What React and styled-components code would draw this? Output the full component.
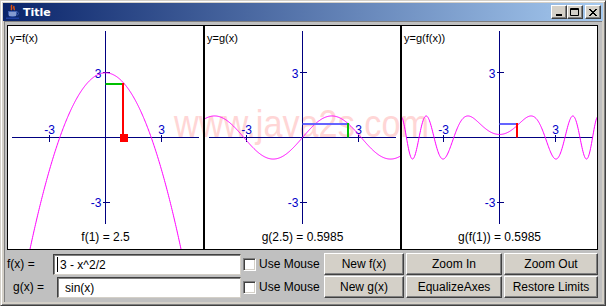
import React from "react";
import styled, { createGlobalStyle } from "styled-components";

// panel inner geometry (pixels)
const W = 195;
const H = 223;
const CX = 97.5;
const CY = 111.5;
const SX = 18.67;
const SY = 21.56;

const f = (x) => 3 - (x * x) / 2;
const g = (x) => Math.sin(x);
const gf = (x) => g(f(x));

function curvePath(fn) {
	let d = "";
	for (let px = 0; px <= W; px += 0.5) {
		const py = CY - fn((px - CX) / SX) * SY;
		d += (d ? "L" : "M") + px.toFixed(2) + " " + py.toFixed(2);
	}
	return d;
}

function Graph({ title, fn, caption, children }) {
	return (
		<Panel>
			<svg width={W} height={H}>
				<g stroke="#000080" strokeWidth="1" shapeRendering="crispEdges">
					<line x1={4} x2={191} y1={CY} y2={CY} />
					<line x1={CX} x2={CX} y1={5} y2={198} />
					<line x1={CX - 3 * SX} x2={CX - 3 * SX} y1={CY - 3} y2={CY + 4} />
					<line x1={CX + 3 * SX} x2={CX + 3 * SX} y1={CY - 3} y2={CY + 4} />
					<line x1={CX - 3} x2={CX + 4} y1={CY - 3 * SY} y2={CY - 3 * SY} />
					<line x1={CX - 3} x2={CX + 4} y1={CY + 3 * SY} y2={CY + 3 * SY} />
				</g>
				<g fill="#0000c8" fontSize="12" fontFamily="'Liberation Sans', Arial, sans-serif">
					<text x={CX - 3 * SX} y={CY - 4} textAnchor="middle">-3</text>
					<text x={CX + 3 * SX} y={CY - 4} textAnchor="middle">3</text>
					<text x={CX - 4} y={CY - 3 * SY + 5} textAnchor="end">3</text>
					<text x={CX - 4} y={CY + 3 * SY + 5} textAnchor="end">-3</text>
				</g>
				<path d={curvePath(fn)} fill="none" stroke="#ff00ff" strokeWidth="1" />
				{children}
				<g fill="#000" fontFamily="'Liberation Sans', Arial, sans-serif">
					<text x={2} y={16} fontSize="11">{title}</text>
					<text x={CX} y={215} fontSize="12" textAnchor="middle">{caption}</text>
				</g>
			</svg>
		</Panel>
	);
}

function TitleButton({ kind }) {
	return (
		<WinButton>
			<svg width="10" height="9" viewBox="0 0 10 9">
				{kind === "min" && <rect x="2" y="6" width="6" height="2" fill="#000" />}
				{kind === "max" && (
					<path d="M0.5 0.5h8v7h-8z M0.5 1.5h8" fill="none" stroke="#000" />
				)}
				{kind === "close" && (
					<path d="M1 1l7 7M2 1l7 7M8 1l-7 7M9 1l-7 7" stroke="#000" strokeWidth="1" />
				)}
			</svg>
		</WinButton>
	);
}

function App() {
	const mY1 = CY - 2.5 * SY;
	return (
		<>
			<GlobalStyle />
			<Window>
				<TitleBar>
					<svg width="16" height="16" viewBox="0 0 16 16">
						<path d="M7 1c-2 2 1 3 -1 5M9 2c-1 2 1 3 0 4" stroke="#e05010" strokeWidth="1.5" fill="none" />
						<path d="M3 7h9v3c0 2-2 3-4.5 3S3 12 3 10z" fill="#4060b0" />
						<path d="M12 8c2 0 2 3 0 3" stroke="#4060b0" fill="none" />
						<rect x="1" y="13.5" width="13" height="1.5" fill="#2040a0" />
						<path d="M4 9h7M4 11h7" stroke="#c8d4f0" />
					</svg>
					<TitleText>Title</TitleText>
					<TitleButtons>
						<TitleButton kind="min" />
						<TitleButton kind="max" />
						<Gap />
						<TitleButton kind="close" />
					</TitleButtons>
				</TitleBar>
				<Body>
					<GraphRow>
						<Watermark width="591" height="225">
							<text
								x="167"
								y="112"
								fontSize="39"
								textLength="255"
								lengthAdjust="spacingAndGlyphs"
								fill="#ffd6d6"
								fontFamily="'Liberation Sans', Arial, sans-serif"
							>
								www.java2s.com
							</text>
						</Watermark>
						<Graph title="y=f(x)" fn={f} caption="f(1) = 2.5">
							<rect x={CX} y={Math.round(mY1) - 1} width={SX} height={2} fill="#00c000" />
							<rect x={114} y={Math.round(mY1) - 1} width={2} height={CY - mY1 + 1} fill="#ff0000" />
							<rect x={112} y={108} width={8} height={8} fill="#ff0000" />
						</Graph>
						<Graph title="y=g(x)" fn={g} caption="g(2.5) = 0.5985">
							<rect x={CX} y={97} width={2.5 * SX} height={2} fill="#6464ff" />
							<rect x={142} y={97} width={2} height={CY - 97} fill="#00c000" />
						</Graph>
						<Graph title="y=g(f(x))" fn={gf} caption="g(f(1)) = 0.5985">
							<rect x={CX} y={97} width={SX} height={2} fill="#6464ff" />
							<rect x={114} y={97} width={2} height={CY - 97} fill="#ff0000" />
						</Graph>
					</GraphRow>
					<Controls>
						<Label>f(x) =</Label>
						<Field>
							<Caret />
							3 - x^2/2
						</Field>
						<Check>
							<Box />
							Use Mouse
						</Check>
						<Button>New f(x)</Button>
						<Button>Zoom In</Button>
						<Button>Zoom Out</Button>

						<Label $indent={6}>g(x) =</Label>
						<Field $offset={4} $pad={7}>sin(x)</Field>
						<Check>
							<Box />
							Use Mouse
						</Check>
						<Button>New g(x)</Button>
						<Button>EqualizeAxes</Button>
						<Button>Restore Limits</Button>
					</Controls>
				</Body>
			</Window>
		</>
	);
}

export default App;

// Styled Components

const GlobalStyle = createGlobalStyle`
	html, body {
		margin: 0;
		padding: 0;
		background: #d4d0c8;
	}
	* {
		box-sizing: border-box;
	}
`;

const Window = styled.div`
	width: 606px;
	height: 306px;
	display: flex;
	flex-direction: column;
	padding: 3px;
	background: #d4d0c8;
	border: 1px solid;
	border-color: #d4d0c8 #404040 #404040 #d4d0c8;
	box-shadow: inset 1px 1px #ffffff, inset -1px -1px #808080;
	font-family: "Liberation Sans", Arial, sans-serif;
	font-size: 12px;
	color: #000;
`;

const TitleBar = styled.div`
	display: flex;
	align-items: center;
	gap: 2px;
	height: 18px;
	margin: -1px -1px 0 -1px;
	padding: 0 2px 0 2px;
	background: linear-gradient(to right, #0a246a, #a6caf0);
`;

const TitleText = styled.span`
	flex: 1;
	color: #ffffff;
	font-family: "DejaVu Sans", Verdana, sans-serif;
	font-weight: bold;
	font-size: 11px;
`;

const TitleButtons = styled.div`
	display: flex;
	align-items: center;
`;

const Gap = styled.div`
	width: 2px;
`;

const WinButton = styled.div`
	width: 16px;
	height: 14px;
	display: flex;
	align-items: center;
	justify-content: center;
	background: #d4d0c8;
	border: 1px solid;
	border-color: #ffffff #404040 #404040 #ffffff;
	box-shadow: inset -1px -1px #808080;
`;

const Body = styled.div`
	flex: 1;
	display: flex;
	flex-direction: column;
	gap: 3px;
	padding: 4px 4px 4px 3px;
	background: #c0c0c0;
	box-shadow: inset 1px 1px #808080;
`;

const GraphRow = styled.div`
	position: relative;
	display: flex;
	height: 225px;
	background: #ffffff;
	overflow: hidden;
`;

const Watermark = styled.svg`
	position: absolute;
	left: 0;
	top: 0;
	pointer-events: none;
`;

const Panel = styled.div`
	position: relative;
	width: 197px;
	height: 225px;
	border: 1px solid #000000;
	overflow: hidden;

	svg {
		display: block;
	}
`;

const Controls = styled.div`
	display: grid;
	grid-template-columns: 44px 188px 79px 80px 96px 94px;
	grid-template-rows: 22px 22px;
	column-gap: 2px;
	row-gap: 1px;
`;

const Label = styled.div`
	display: flex;
	align-items: center;
	padding-left: ${(p) => p.$indent || 0}px;
	white-space: nowrap;
`;

const Field = styled.div`
	display: flex;
	align-items: center;
	margin-top: 1px;
	margin-left: ${(p) => p.$offset || 0}px;
	padding-left: ${(p) => p.$pad || 3}px;
	background: #ffffff;
	border: 1px solid;
	border-color: #404040 #d4d0c8 #d4d0c8 #404040;
	box-shadow: inset 1px 1px #808080;
	white-space: pre;
`;

const Caret = styled.span`
	width: 1px;
	height: 15px;
	margin-right: 2px;
	background: #000000;
`;

const Check = styled.div`
	display: flex;
	align-items: center;
	gap: 3px;
	white-space: nowrap;
`;

const Box = styled.span`
	width: 13px;
	height: 13px;
	background: #ffffff;
	border: 1px solid;
	border-color: #808080 #ffffff #ffffff #808080;
	box-shadow: inset 1px 1px #404040, inset -1px -1px #d4d0c8;
`;

const Button = styled.div`
	display: flex;
	align-items: center;
	justify-content: center;
	background: #d4d0c8;
	border: 1px solid;
	border-color: #ffffff #404040 #404040 #ffffff;
	box-shadow: inset -1px -1px #808080;
	white-space: nowrap;
`;
